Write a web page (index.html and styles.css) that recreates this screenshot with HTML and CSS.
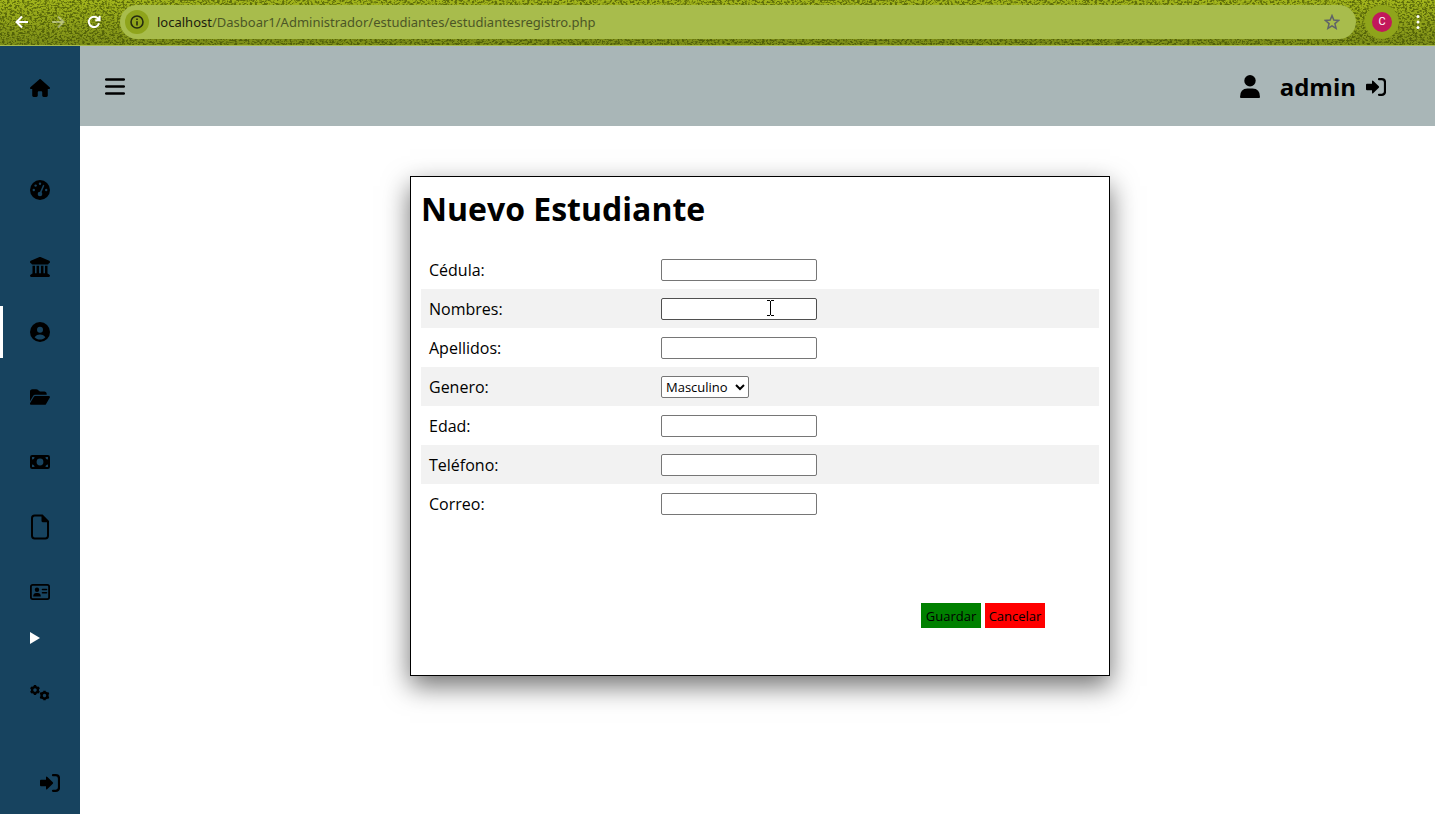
FILE: index.html
```html
<!DOCTYPE html>
<html lang="es">
<head>
<meta charset="utf-8">
<title>Nuevo Estudiante</title>
<link rel="stylesheet" href="styles.css">
</head>
<body>
<svg class="defs" aria-hidden="true">
  <symbol id="login" viewBox="0 -2 20 20"><path d="M0 6.800Q0 5.800 1 5.800H6V3.500Q6 1.700 7.400 3l5.400 5.200q.8.8 0 1.600L7.400 15Q6 16.300 6 14.500V12.200H1Q0 12.200 0 11.200z"/><path d="M13 1.200h2.800Q19 1.200 19 4.400v9.200q0 3.200-3.200 3.200H13" fill="none" stroke="currentColor" stroke-width="2.200" stroke-linecap="round"/></symbol>
  <symbol id="gear" viewBox="-5 -5 10 10"><circle r="2.900" fill="none" stroke="currentColor" stroke-width="2.400"/><path d="M0-5V-3M0 5V3M-4.330-2.500-2.600-1.500M4.330 2.500 2.600 1.500M-4.330 2.500-2.600 1.500M4.330-2.500 2.600-1.500" stroke="currentColor" stroke-width="2.400"/></symbol>
</svg>
<div class="browser">
  <svg class="grass" aria-hidden="true"><filter id="grain" x="0" y="0" width="100%" height="100%" color-interpolation-filters="sRGB"><feTurbulence type="fractalNoise" baseFrequency=".4 .55" numOctaves="3" seed="4"/><feColorMatrix values="0 0 0 0 .2  0 0 0 0 .25  0 0 0 0 0  5 0 0 0 -2.200"/></filter><rect width="100%" height="100%" filter="url(#grain)"/></svg>
  <button class="tool" aria-label="Atrás"><svg width="14" height="14" viewBox="0 0 14 14"><path d="M13 7H2M7 1.500 1.500 7 7 12.500"/></svg></button>
  <button class="tool dim" aria-label="Adelante"><svg width="14" height="14" viewBox="0 0 14 14"><path d="M1 7h11M7 1.500 12.500 7 7 12.500"/></svg></button>
  <button class="tool" aria-label="Recargar"><svg width="14" height="14" viewBox="0 0 14 14"><path d="M12 8.200A5.200 5.200 0 1 1 10.800 3.300L12.300 4.900M12.600 1V5.300H8.300"/></svg></button>
  <div class="address">
    <button class="info" aria-label="Información del sitio"><svg width="14" height="14" viewBox="0 0 14 14"><circle cx="7" cy="7" r="6"/><path d="M7 6.200v4.200M7 3.400v1.600"/></svg></button>
    <span class="url"><b>localhost</b>/Dasboar1/Administrador/estudiantes/estudiantesregistro.php</span>
    <button class="star" aria-label="Marcador"><svg width="16" height="16" viewBox="0 0 16 16"><path d="m8 1.600 1.800 4.500 4.800.4-3.700 3.100 1.200 4.700L8 11.800l-4.100 2.500 1.200-4.700L1.400 6.500l4.800-.4z"/></svg></button>
  </div>
  <button class="profile"><span>C</span></button>
  <button class="more" aria-label="Menú"><svg width="4" height="16" viewBox="0 0 4 16"><circle cx="2" cy="2.500" r="1.500"/><circle cx="2" cy="8" r="1.500"/><circle cx="2" cy="13.500" r="1.500"/></svg></button>
</div>
<div class="app">
  <nav class="sidebar">
    <a class="item home" href="#" aria-label="Inicio"><svg width="20" height="18" viewBox="0 0 576 512"><path d="M575.8 255.500c0 18-15 32.100-32 32.100h-32l.7 160.200c0 2.700-.2 5.400-.5 8.100V472c0 22.100-17.900 40-40 40H392c-22.100 0-40-17.900-40-40V384c0-17.700-14.300-32-32-32H256c-17.700 0-32 14.300-32 32v88c0 22.100-17.900 40-40 40H104c-22.100 0-40-17.900-40-40V287.600H32c-18 0-32-14-32-32.100 0-9 3-17 10-24L266.400 8c7-7 15-8 22-8s15 2 21 7L564.800 231.500c8 7 12 15 11 24z"/></svg></a>
    <a class="item panel" href="#" aria-label="Panel"><svg width="20" height="20" viewBox="0 0 20 20"><circle cx="10" cy="10" r="10"/><g class="hole"><circle cx="10" cy="3.800" r="1.200"/><circle cx="5.600" cy="5.600" r="1.200"/><circle cx="3.800" cy="10" r="1.200"/><circle cx="16.200" cy="10" r="1.200"/><circle cx="10" cy="14" r="2.300"/><path class="needle" d="M10.600 12.500 13.500 5.700"/></g></svg></a>
    <div class="group">
      <a class="item" href="#" aria-label="Institución"><svg width="20" height="20" viewBox="0 0 512 512"><path d="M243.400 2.600l-224 96c-14 6-21.800 21-18.700 35.800S16.800 160 32 160v8c0 13.300 10.700 24 24 24H456c13.300 0 24-10.700 24-24v-8c15.200 0 28.300-10.700 31.300-25.600s-4.800-29.900-18.700-35.800l-224-96c-8-3.400-17.200-3.400-25.200 0zM128 224H64V420.300c-.6.3-1.200.7-1.800 1.100l-48 32c-11.700 7.800-17 22.400-12.900 35.900S17.900 512 32 512H480c14.100 0 26.500-9.200 30.600-22.700s-1.100-28.100-12.900-35.900l-48-32c-.6-.4-1.200-.7-1.800-1.100V224H384V416H344V224H280V416H232V224H168V416H128V224z"/></svg></a>
      <a class="item active" href="#" aria-label="Estudiantes"><svg width="20" height="20" viewBox="0 0 20 20"><circle cx="10" cy="10" r="10"/><g class="hole"><circle cx="10" cy="7.800" r="3"/><path d="M4.600 15.200C6.200 13.200 8 12.500 10 12.500s3.800.7 5.400 2.700C14 16.700 12 17.500 10 17.500s-4-.8-5.400-2.300z"/></g></svg></a>
      <a class="item" href="#" aria-label="Archivos"><svg width="20" height="18" viewBox="0 0 576 512"><path d="M88.700 223.800 0 375.800V96C0 60.700 28.700 32 64 32H181.500c17 0 33.300 6.700 45.300 18.700l26.500 26.500c12 12 28.300 18.700 45.300 18.700H416c35.300 0 64 28.700 64 64v32H144c-22.800 0-43.800 12.100-55.300 31.800zm27.600 16.100C122.100 230 132.600 224 144 224H544c11.500 0 22 6.100 27.700 16.100s5.700 22.200-.1 32.100l-112 192C453.900 474 443.400 480 432 480H32c-11.500 0-22-6.100-27.700-16.100s-5.700-22.200.1-32.100l112-192z"/></svg></a>
      <a class="item" href="#" aria-label="Pagos"><svg width="20" height="14" viewBox="0 0 20 14"><rect width="20" height="14" rx="2.200"/><g class="hole"><circle cx="10" cy="7" r="3.400"/><path d="M2 4.500V2h2.500A2.500 2.500 0 0 1 2 4.500zM18 4.500V2h-2.500A2.500 2.500 0 0 0 18 4.500zM2 9.500V12h2.500A2.500 2.500 0 0 0 2 9.500zM18 9.500V12h-2.500A2.500 2.500 0 0 1 18 9.500z"/></g></svg></a>
      <a class="item" href="#" aria-label="Documentos"><svg width="20" height="26" viewBox="0 0 20 26"><path d="M4.700 1.500h7.500L18 7.300v14.500q0 2.700-2.700 2.700H4.700q-2.700 0-2.700-2.700V4.200q0-2.700 2.700-2.700z" fill="none" stroke="currentColor" stroke-width="2"/><path d="M11.500 1.200 18.600 8.200H13q-1.500 0-1.500-1.500z"/></svg></a>
      <a class="item" href="#" aria-label="Credenciales"><svg width="20" height="16" viewBox="0 0 20 16"><rect x=".9" y=".9" width="18.200" height="14.200" rx="1.800" fill="none" stroke="currentColor" stroke-width="1.800"/><circle cx="7" cy="5.800" r="2.200"/><path d="M3.200 12.500Q3.200 9 6.200 9h1.600q3 0 3 3.500z"/><path d="M12.500 5.500h4M12.500 8.800h4" stroke="currentColor" stroke-width="1.600" stroke-linecap="round"/></svg></a>
    </div>
    <button class="expand" aria-label="Desplegar"><svg width="10" height="12" viewBox="0 0 10 12"><path d="M0 0 10 6 0 12z"/></svg></button>
    <a class="item" href="#" aria-label="Ajustes"><svg width="20" height="16" viewBox="0 0 20 16"><use href="#gear" width="10" height="10"/><use href="#gear" x="9.500" y="5.500" width="10" height="10"/></svg></a>
    <a class="item exit" href="#" aria-label="Salir"><svg width="20" height="20"><use href="#login"/></svg></a>
  </nav>
  <div class="content">
    <header class="topbar">
      <button class="menu" aria-label="Menú lateral"><svg width="20" height="20" viewBox="0 -2 20 20"><path d="M1.200 1.500h17.600M1.200 8.500h17.600M1.200 15.500h17.600" stroke="currentColor" stroke-width="2.600" stroke-linecap="round"/></svg></button>
      <div class="account">
        <svg width="20" height="23" viewBox="0 0 20 23"><circle cx="10" cy="5.700" r="5.700"/><path d="M0 22Q0 13.500 7.500 13.500h5Q20 13.500 20 22q0 1-1 1H1q-1 0-1-1z"/></svg>
        <span class="user">admin</span>
        <a href="#" aria-label="Cerrar sesión"><svg width="20" height="20"><use href="#login"/></svg></a>
      </div>
    </header>
    <main>
      <form class="card">
        <h1>Nuevo Estudiante</h1>
        <table>
          <tr><td><label for="cedula">Cédula:</label></td><td><input id="cedula" type="text"></td></tr>
          <tr><td><label for="nombres">Nombres:</label></td><td><span class="pointed"><input id="nombres" type="text"><svg class="caret" width="7" height="16" viewBox="0 0 7 16" aria-hidden="true"><path d="M0 .5h3M4 .5h3M0 15.500h3M4 15.500h3M3.500 1v14"/></svg></span></td></tr>
          <tr><td><label for="apellidos">Apellidos:</label></td><td><input id="apellidos" type="text"></td></tr>
          <tr><td><label for="genero">Genero:</label></td><td><select id="genero"><option>Masculino</option><option>Femenino</option></select></td></tr>
          <tr><td><label for="edad">Edad:</label></td><td><input id="edad" type="text"></td></tr>
          <tr><td><label for="telefono">Teléfono:</label></td><td><input id="telefono" type="text"></td></tr>
          <tr><td><label for="correo">Correo:</label></td><td><input id="correo" type="text"></td></tr>
        </table>
        <div class="actions"><button class="save" type="submit">Guardar</button><button class="cancel" type="button">Cancelar</button></div>
      </form>
    </main>
  </div>
</div>
</body>
</html>
```
FILE: styles.css
```css
* { box-sizing: border-box; }
body {
  margin: 0;
  min-height: 100vh;
  display: flex;
  flex-direction: column;
  font-family: "Open Sans", "Noto Sans", sans-serif;
  color: #000;
  background: #fff;
}
button { border: 0; padding: 0; background: none; font-family: inherit; color: inherit; }
a { color: inherit; }
svg { display: block; fill: currentColor; flex: none; }
.defs { position: absolute; width: 0; height: 0; }

/* Browser bar */
.browser {
  position: relative;
  display: flex;
  align-items: center;
  height: 46px;
  padding: 0 15px 2px;
  border-bottom: 1px solid #a8bc4c;
  background: linear-gradient(#a3b61c, #7d8e18);
  color: #fff;
}
.browser > * { position: relative; }
.browser > .grass { position: absolute; inset: 0; width: 100%; height: 100%; opacity: .6; }
.tool { margin-right: 22px; }
.tool svg { fill: none; stroke: #fff; stroke-width: 2; }
.dim { opacity: .4; }
.address {
  flex: 1;
  display: flex;
  align-items: center;
  height: 34px;
  margin-left: -3px;
  padding: 0 16px 0 5px;
  border-radius: 17px;
  background: #a8bc4c;
}
.info {
  display: grid;
  place-items: center;
  width: 24px;
  height: 24px;
  margin-right: 8px;
  border-radius: 50%;
  background: #8fa41b;
}
.info svg { fill: none; stroke: #252b10; stroke-width: 1.600; }
.url { flex: 1; font-family: "Noto Sans", sans-serif; font-size: 13px; color: #4c5626; }
.url b { font-weight: 400; color: #1c200d; }
.star svg { fill: none; stroke: #5f6368; stroke-width: 1.500; }
.profile {
  display: grid;
  place-items: center;
  width: 34px;
  height: 34px;
  margin: 0 17px 0 9px;
  border-radius: 50%;
  background: #8fa41b;
}
.profile span {
  width: 20px;
  border-radius: 50%;
  background: #c2185b;
  font: 11px/20px Roboto, sans-serif;
}

/* Application frame */
.app { flex: 1; display: flex; }
.sidebar {
  display: flex;
  flex-direction: column;
  width: 80px;
  padding: 16px 0 6px;
  background: #17435f;
}
.item { display: grid; place-items: center; height: 52px; border: solid transparent; border-width: 0 3px; }
.home { margin-bottom: 50px; }
.panel { margin-bottom: 25px; }
.group { display: flex; flex-direction: column; gap: 13px; }
.active { border-left-color: #fff; }
.hole { fill: #17435f; }
.needle { stroke: #17435f; stroke-width: 1.600; stroke-linecap: round; }
.expand { height: 40px; margin-bottom: 9px; padding-left: 30px; color: #fff; }
.exit { margin-top: auto; padding-left: 20px; }
.content { flex: 1; }
.topbar {
  display: flex;
  align-items: center;
  justify-content: space-between;
  height: 80px;
  padding: 0 49px 0 25px;
  background: #a9b6b7;
}
.account { display: flex; align-items: center; }
.user { margin: 0 10px 0 20px; font-size: 24px; font-weight: 700; }

/* Registration form */
main { padding: 50px 15px 50px 20px; }
.card {
  max-width: 700px;
  margin: 0 auto;
  padding: 10px 10px 47px;
  border: 1px solid #000;
  box-shadow: 0 10px 25px rgba(0, 0, 0, .56);
}
h1 { margin: 0 0 19px; font-size: 32px; line-height: 44px; }
table { width: 100%; border-collapse: collapse; table-layout: fixed; }
td { height: 39px; padding: 0 8px; line-height: 24px; }
td:first-child { width: 232px; }
tr:nth-child(even) { background: #f2f2f2; }
input, select {
  display: block;
  width: 156px;
  height: 22px;
  border: 1px solid #767676;
  border-radius: 2px;
  background: #fff;
  font-family: inherit;
  font-size: 13px;
}
select { width: 88px; }
.pointed { display: block; position: relative; width: 156px; }
.pointed input { border-color: #4f4f4f; }
.caret { position: absolute; left: 106px; top: 2px; fill: none; stroke: #000; }
.actions { display: flex; justify-content: flex-end; gap: 4px; margin-top: 80px; padding-right: 54px; }
.actions button { width: 60px; height: 25px; font-size: 13px; }
.save { background: #008000; }
.cancel { background: #f00; }
```
